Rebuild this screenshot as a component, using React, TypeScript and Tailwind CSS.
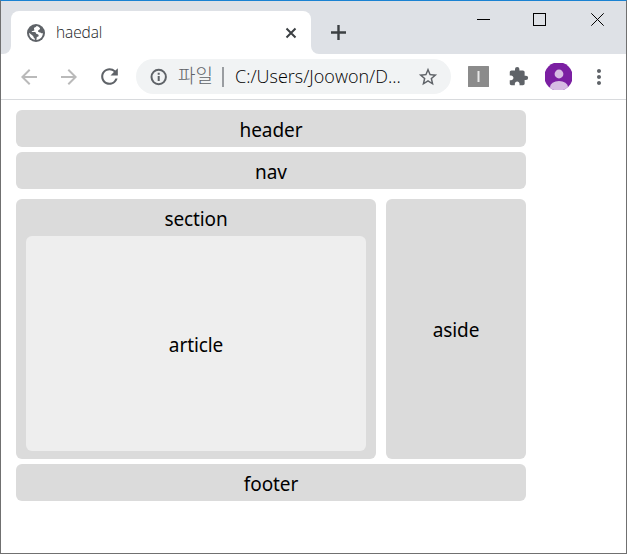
import React from "react";
import {
  MdArrowBack,
  MdArrowForward,
  MdRefresh,
  MdStarBorder,
  MdExtension,
  MdMoreVert,
} from "react-icons/md";

const box = "flex items-center justify-center rounded-[6px] bg-[#dbdbdb]";

function Globe() {
  return (
    <svg className="h-[18px] w-[18px] shrink-0" viewBox="0 0 18 18">
      <circle cx="9" cy="9" r="9" fill="#5f6368" />
      <path
        d="M9.6 2.1 C9.2 3.2 7.4 3.4 7 4.2 C6.7 5.2 7.8 5.6 7.2 6.6 C6.6 7.4 4.8 6.7 4.6 8 L7.6 8 C9.2 8.2 8.8 9.8 9.8 10.1 C11.2 10.4 12.2 11.2 11.4 12.4 L9.8 13 L9.4 15.9 C13.4 15.7 15.9 12.7 15.9 9 C14.5 9.6 14 8.4 12.7 8.4 C11.2 8.3 10.6 7.3 11.4 6.3 C12 5.5 13 5.6 13.1 4.4 C12.3 3.1 11 2.3 9.6 2.1 Z M2.1 8.8 C2 12.5 4.5 15.3 7.8 15.9 L7.8 14.4 C6.2 13.9 7 12.4 5.8 11.7 Z"
        fill="#fff"
      />
    </svg>
  );
}

function TitleBar() {
  return (
    <div className="flex h-[53px] bg-[#dee1e6]">
      <div className="w-[10px] bg-white">
        <div className="h-full w-full rounded-br-[8px] bg-[#dee1e6]" />
      </div>
      <div className="flex w-[300px] pt-[10px]">
        <div className="flex w-full items-center rounded-t-[8px] bg-white pl-[16px] pr-[14px]">
          <Globe />
          <span className="ml-[11px] flex-1 pb-[2px] font-['Open_Sans',sans-serif] text-[15.5px] font-light leading-5 tracking-[-0.1px] text-[#202124]">
            haedal
          </span>
          <svg className="h-[12px] w-[12px] shrink-0" viewBox="0 0 12 12">
            <path d="M1.5 1.5 L10.5 10.5 M10.5 1.5 L1.5 10.5" stroke="#3c4043" strokeWidth="2" />
          </svg>
        </div>
      </div>
      <div className="flex-1 bg-white">
        <div className="flex h-full justify-between rounded-bl-[8px] bg-[#dee1e6]">
          <svg className="ml-[19px] mt-[23px] h-[17px] w-[17px]" viewBox="0 0 17 17">
            <path d="M8.5 1 V16 M1 8.5 H16" stroke="#3c4043" strokeWidth="2.4" />
          </svg>
          <div className="mr-[21px] mt-[12px] flex gap-[42px]">
            <svg className="h-[14px] w-[14px]" viewBox="0 0 14 14">
              <path d="M0 6.5 H13" stroke="#000" />
            </svg>
            <svg className="h-[14px] w-[14px]" viewBox="0 0 14 14">
              <rect x="0.5" y="0.5" width="12" height="12" fill="none" stroke="#000" />
            </svg>
            <svg className="ml-[2px] h-[14px] w-[14px]" viewBox="0 0 14 14">
              <path d="M0.3 0.3 L12.7 12.7 M12.7 0.3 L0.3 12.7" stroke="#000" />
            </svg>
          </div>
        </div>
      </div>
    </div>
  );
}

function Toolbar() {
  return (
    <div className="flex h-[46px] items-center border-b border-[#d8dadd] bg-white pl-[15.5px] text-[#5f6368]">
      <MdArrowBack className="h-6 w-6 shrink-0 text-[#bababa]" />
      <MdArrowForward className="ml-4 h-6 w-6 shrink-0 text-[#bababa]" />
      <MdRefresh className="ml-4 h-[25px] w-[25px] shrink-0" />
      <div className="ml-[14.5px] flex h-[35px] w-[315px] shrink-0 items-center rounded-full bg-[#f1f3f4] pl-[13px]">
        <svg className="h-5 w-5 shrink-0" viewBox="0 0 20 20">
          <circle cx="9.7" cy="10" r="7.2" fill="none" stroke="#5f6368" strokeWidth="2" />
          <path d="M9.7 9 V14 M9.7 5.8 V7.8" stroke="#5f6368" strokeWidth="2" />
        </svg>
        <span className="ml-[9px] w-[36px] whitespace-nowrap pb-[4px] font-['Noto_Sans_CJK_KR',sans-serif] text-[19px] font-light leading-6">
          파일
        </span>
        <span className="ml-[8px] h-5 w-[2px] bg-[#9a9da1]" />
        <span className="ml-[11px] w-[166px] whitespace-nowrap pb-px font-['Open_Sans',sans-serif] text-[18px] font-light leading-6 text-black">
          C:/Users/Joowon/D...
        </span>
        <MdStarBorder className="ml-[16px] h-[22px] w-[22px] shrink-0" />
      </div>
      <svg className="ml-[17px] h-[21px] w-[21px] shrink-0" viewBox="0 0 21 21">
        <rect width="21" height="21" rx="0.5" fill="#8b8b8b" />
        <rect x="9.5" y="5" width="2" height="11" fill="#e8e8e8" />
      </svg>
      <MdExtension className="ml-[19px] h-[21px] w-[21px] shrink-0" />
      <svg className="ml-[16px] h-[27px] w-[27px] shrink-0" viewBox="0 0 27 27">
        <clipPath id="avatar">
          <circle cx="13.5" cy="13.5" r="14.2" />
        </clipPath>
        <g clipPath="url(#avatar)">
          <rect width="27" height="27" fill="#7b1fa2" />
          <circle cx="14" cy="11" r="4.4" fill="#d7bce3" />
          <ellipse cx="14" cy="24" rx="9" ry="6" fill="#d7bce3" />
        </g>
      </svg>
      <MdMoreVert className="ml-[14.5px] h-6 w-6 shrink-0" />
    </div>
  );
}

export default function App() {
  return (
    <div className="flex h-[554px] w-[627px] flex-col border border-x-[#707070] border-b-[#707070] border-t-[#1a82d2] bg-white">
      <TitleBar />
      <Toolbar />
      <div className="ml-[15px] mt-[10px] flex w-[510px] flex-col font-['Noto_Sans',sans-serif] text-[19px] leading-[27px] tracking-[-0.1px] text-black">
        <header className={`${box} h-[37px] pt-[3px]`}>header</header>
        <nav className={`${box} mt-[5px] h-[37px] pt-[3px]`}>nav</nav>
        <div className="mt-[10px] flex gap-[10px]">
          <section className="flex h-[260px] w-[360px] flex-col rounded-[6px] bg-[#dbdbdb] px-[10px] pt-[7px] text-center">
            <span>section</span>
            <article className="mt-[3px] flex h-[215px] items-center justify-center rounded-[6px] bg-[#eee] pt-[3px]">
              article
            </article>
          </section>
          <aside className={`${box} h-[260px] w-[140px] pt-[3px]`}>aside</aside>
        </div>
        <footer className={`${box} mt-[5px] h-[37px] pt-[3px]`}>footer</footer>
      </div>
    </div>
  );
}
